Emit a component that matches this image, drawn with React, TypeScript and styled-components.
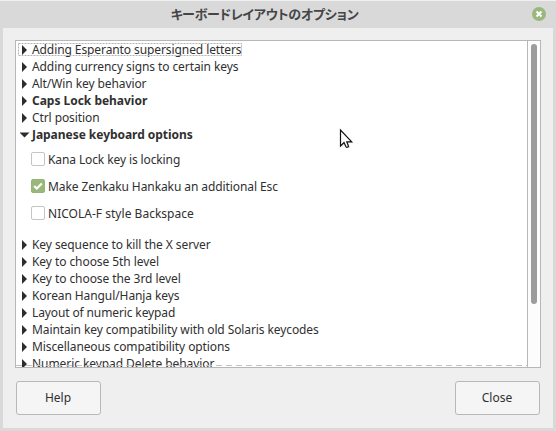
import React from "react";
import styled, { createGlobalStyle } from "styled-components";

const GlobalStyle = createGlobalStyle`
  * { box-sizing: border-box; }
  body { margin: 0; overflow: hidden; font: 12px/17px "Noto Sans", "Noto Sans CJK JP", sans-serif; color: #303030; }
`;

const Dialog = styled.div`
  position: relative;
  display: flex;
  flex-direction: column;
  width: 556px;
  height: 431px;
  padding: 0 3px 3px;
  background: #d9d9d9;
  border-top: 1px solid #f0f0f0;
`;

const TitleBar = styled.header`
  display: grid;
  grid-template-columns: 24px 1fr 24px;
  align-items: start;
  height: 27px;
  flex: none;
`;

const Title = styled.h1`
  grid-column: 2;
  margin: 0;
  padding: 3px 27px 0 0;
  text-align: center;
  font: bold 13px/20px "Noto Sans CJK JP", sans-serif;
  font-feature-settings: "palt";
  letter-spacing: -0.27px;
  color: #454545;
`;

const CloseIcon = styled.svg`
  display: block;
  width: 14px;
  height: 14px;
  margin: 6px 0 0 3px;
`;

const Content = styled.main`
  display: flex;
  flex: 1;
  flex-direction: column;
  padding: 12px;
  background: #efefef;
`;

const ListBox = styled.section`
  display: flex;
  flex: none;
  width: 526px;
  height: 328px;
  border: 1px solid #b7b7b7;
  background: #fff;
`;

const Viewport = styled.div`
  position: relative;
  width: 511px;
  height: 326px;
  overflow: hidden;
`;

const Overshoot = styled.svg`
  position: absolute;
  left: 0;
  bottom: 1px;
  width: 511px;
  height: 1px;
`;

const Row = styled.div<{ $strong?: boolean }>`
  display: flex;
  align-items: center;
  height: 17px;
  padding-left: 4px;
  font-weight: ${(p) => (p.$strong ? 700 : 400)};
`;

const Arrow = styled.svg`
  flex: none;
  width: 10px;
  height: 10px;
  margin-right: 2px;
`;

const Label = styled.span<{ $spacing?: number }>`
  white-space: nowrap;
  letter-spacing: ${(p) => p.$spacing ?? -0.09}px;
`;

const FocusOutline = styled.svg`
  position: absolute;
  left: 2px;
  top: 2px;
  width: 224px;
  height: 13px;
`;

const CheckGroup = styled.div`
  padding: 3px 0 9px 15px;
`;

const CheckRow = styled.label`
  display: flex;
  align-items: center;
  gap: 3px;
  height: 27px;
`;

const CheckBox = styled.span<{ $checked?: boolean }>`
  display: flex;
  align-items: center;
  justify-content: center;
  width: 14px;
  height: 14px;
  margin-top: -1px;
  border: 1px solid ${(p) => (p.$checked ? "#96b576" : "#c5c5c5")};
  border-radius: 2px;
  background: ${(p) => (p.$checked ? "#9ab87c" : "#fff")};
`;

const ScrollTrack = styled.div`
  width: 13px;
  height: 326px;
  padding: 3px 3px 0;
  border-left: 1px solid #b7b7b7;
  background: #fcfcfc;
`;

const ScrollThumb = styled.div`
  width: 6px;
  height: 260px;
  border-radius: 3px;
  background: #9c9c9c;
`;

const Actions = styled.footer`
  display: flex;
  justify-content: space-between;
  padding: 13px 1px 0;
`;

const Button = styled.button`
  width: 85px;
  height: 34px;
  padding: 0 1px 2px 0;
  border: 1px solid #b8b8b8;
  border-radius: 3px;
  background: #f5f5f5;
  color: #303030;
  font: inherit;
`;

const Pointer = styled.svg`
  position: absolute;
  left: 339px;
  top: 127px;
  width: 16px;
  height: 22px;
`;

type Item = { text: string; strong?: boolean; open?: boolean; focused?: boolean; spacing?: number };

const before: Item[] = [
  { text: "Adding Esperanto supersigned letters", focused: true },
  { text: "Adding currency signs to certain keys" },
  { text: "Alt/Win key behavior" },
  { text: "Caps Lock behavior", strong: true, spacing: -0.02 },
  { text: "Ctrl position" },
  { text: "Japanese keyboard options", strong: true, open: true, spacing: -0.04 },
];

const after: Item[] = [
  { text: "Key sequence to kill the X server", spacing: -0.07 },
  { text: "Key to choose 5th level", spacing: -0.07 },
  { text: "Key to choose the 3rd level", spacing: -0.07 },
  { text: "Korean Hangul/Hanja keys" },
  { text: "Layout of numeric keypad", spacing: -0.12 },
  { text: "Maintain key compatibility with old Solaris keycodes", spacing: -0.1 },
  { text: "Miscellaneous compatibility options", spacing: -0.1 },
  { text: "Numeric keypad Delete behavior", spacing: -0.07 },
];

const checks = [
  { text: "Kana Lock key is locking", checked: false, spacing: -0.11 },
  { text: "Make Zenkaku Hankaku an additional Esc", checked: true, spacing: -0.09 },
  { text: "NICOLA-F style Backspace", checked: false, spacing: 0.02 },
];

function OptionRow({ text, strong, open, focused, spacing }: Item) {
  return (
    <Row $strong={strong}>
      <Arrow viewBox="0 0 10 10">
        <path d={open ? "M-.5 2.5H9.5L4.5 7.5Z" : "M2 0L7 5L2 10Z"} fill="#2d2d2d" />
      </Arrow>
      <Label $spacing={spacing}>{text}</Label>
      {focused && (
        <FocusOutline>
          <rect x=".5" y=".5" width="223" height="12" fill="none" stroke="#b2b2b2" strokeDasharray="2 1" />
        </FocusOutline>
      )}
    </Row>
  );
}

export default function App() {
  return (
    <>
      <GlobalStyle />
      <Dialog>
        <TitleBar>
          <Title>キーボードレイアウトのオプション</Title>
          <CloseIcon viewBox="0 0 14 14">
            <circle cx="7" cy="7" r="7" fill="#9ab87c" />
            <path d="M4.5 4.5L9.5 9.5M9.5 4.5L4.5 9.5" stroke="#fff" strokeWidth="2" />
          </CloseIcon>
        </TitleBar>
        <Content>
          <ListBox>
            <Viewport>
              {before.map((item) => <OptionRow key={item.text} {...item} />)}
              <CheckGroup>
                {checks.map((item) => (
                  <CheckRow key={item.text}>
                    <CheckBox $checked={item.checked}>
                      {item.checked && (
                        <svg width="12" height="12" viewBox="0 0 12 12">
                          <path d="M2.2 6L4.8 8.5L9.8 3.5" fill="none" stroke="#fff" strokeWidth="2.2" />
                        </svg>
                      )}
                    </CheckBox>
                    <Label $spacing={item.spacing}>{item.text}</Label>
                  </CheckRow>
                ))}
              </CheckGroup>
              {after.map((item) => <OptionRow key={item.text} {...item} />)}
              <Overshoot>
                <path d="M0 .5H511" stroke="#c4c4c4" strokeDasharray="6 4" />
              </Overshoot>
            </Viewport>
            <ScrollTrack><ScrollThumb /></ScrollTrack>
          </ListBox>
          <Actions>
            <Button>Help</Button>
            <Button>Close</Button>
          </Actions>
        </Content>
        <Pointer viewBox="0 0 16 22">
          <path d="M2.5 3V19L6 15.5L8.5 20.5L11 19.3L8.8 14.5H14Z" fill="#888" opacity=".3" />
          <path d="M1.5 2V18L5 14.5L7 18.8Q8.2 20 9.5 18.3L7.8 13.8H12.7Z" fill="#fff" stroke="#111" strokeWidth="1.2" />
        </Pointer>
      </Dialog>
    </>
  );
}
